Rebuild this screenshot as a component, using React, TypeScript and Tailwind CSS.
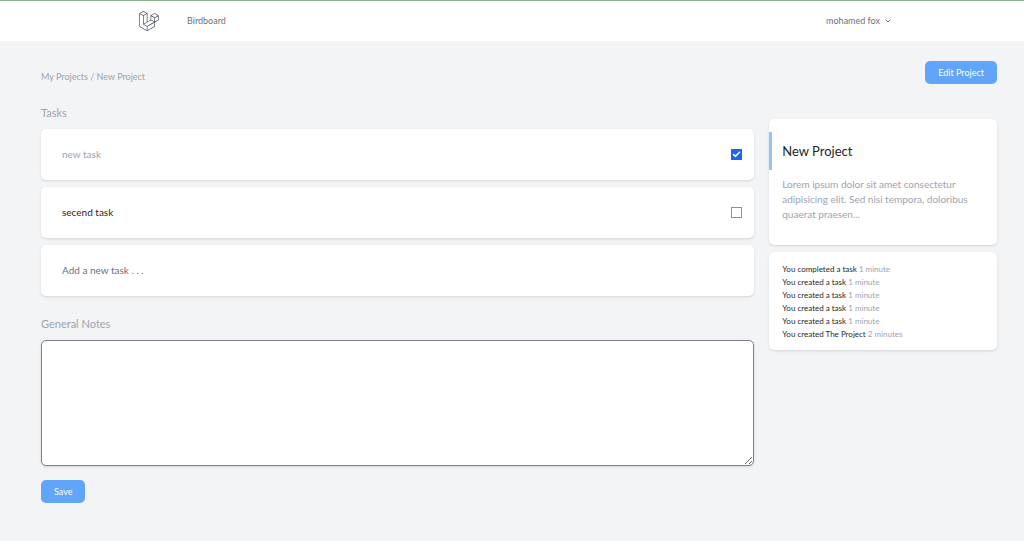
import { Check, ChevronDown } from "lucide-react";
import { SiLaravel } from "react-icons/si";

interface Task {
  id: number;
  body: string;
  completed: boolean;
}

interface Activity {
  id: number;
  text: string;
  time: string;
}

const tasks: Task[] = [
  { id: 1, body: "new task", completed: true },
  { id: 2, body: "secend task", completed: false },
];

const activities: Activity[] = [
  { id: 1, text: "You completed a task", time: "1 minute" },
  { id: 2, text: "You created a task", time: "1 minute" },
  { id: 3, text: "You created a task", time: "1 minute" },
  { id: 4, text: "You created a task", time: "1 minute" },
  { id: 5, text: "You created a task", time: "1 minute" },
  { id: 6, text: "You created The Project", time: "2 minutes" },
];

function Navigation() {
  return (
    <nav className="border-t border-t-[#8fb093] bg-white">
      <div className="mx-auto flex h-10 w-full max-w-[770px] items-center pl-3 pr-[5px]">
        <a href="#" aria-label="Home" className="text-[#374151]">
          <SiLaravel className="h-5 w-5" />
        </a>
        <a href="#" className="ml-7 text-[9px] text-[#6b7280]">
          Birdboard
        </a>
        <button type="button" className="ml-auto flex items-center gap-1 text-[9px] text-[#6b7280]">
          mohamed fox
          <ChevronDown className="h-2 w-2" strokeWidth={3} />
        </button>
      </div>
    </nav>
  );
}

function TaskRow({ task }: { task: Task }) {
  return (
    <form className="flex items-center rounded-[5px] bg-white py-[18px] pl-[21px] pr-3 shadow-sm">
      <input
        type="text"
        aria-label="Task"
        defaultValue={task.body}
        className={
          task.completed
            ? "min-w-0 flex-1 text-[10px] leading-[15px] text-[#9ca3af] outline-none"
            : "min-w-0 flex-1 text-[10px] leading-[15px] text-[#1f1f1f] outline-none"
        }
      />
      <span className="relative flex">
        <input
          type="checkbox"
          aria-label={`Complete ${task.body}`}
          defaultChecked={task.completed}
          className="peer h-[11px] w-[11px] appearance-none border border-[#8b909b] bg-white checked:border-[#1c64f2] checked:bg-[#1c64f2]"
        />
        <Check
          className="pointer-events-none absolute inset-0 m-auto hidden h-[9px] w-[9px] text-white peer-checked:block"
          strokeWidth={4}
        />
      </span>
    </form>
  );
}

export default function App() {
  return (
    <div className="min-h-screen bg-[#f3f4f6] font-['Lato','Liberation_Sans',sans-serif]">
      <Navigation />
      <main className="pb-9 pl-[41px] pr-3 pt-5">
        <header className="flex items-start justify-between pr-[15px]">
          <p className="pt-[9px] text-[9px] leading-[14px] text-[#9ca3af]">
            <a href="#">My Projects</a> / New Project
          </p>
          <a
            href="#"
            className="rounded-[5px] bg-[#60a5fa] px-[13px] py-1 text-[9px] leading-[15px] text-white"
          >
            Edit Project
          </a>
        </header>

        <div className="flex pt-[21px]">
          <div className="w-3/4 pr-[15px]">
            <h2 className="text-[11px] leading-4 text-[#9ca3af]">Tasks</h2>
            <div className="mt-2 flex flex-col gap-[7px]">
              {tasks.map((task) => (
                <TaskRow key={task.id} task={task} />
              ))}
              <form className="flex rounded-[5px] bg-white px-[21px] py-[18px] shadow-sm">
                <input
                  type="text"
                  aria-label="New task"
                  placeholder="Add a new task . . ."
                  className="w-full text-[10px] leading-[15px] outline-none placeholder:text-[#6b7280]"
                />
              </form>
            </div>

            <form className="pt-5">
              <label htmlFor="notes" className="block text-[11px] leading-4 text-[#9ca3af]">
                General Notes
              </label>
              <textarea
                id="notes"
                className="mt-2 block h-[126px] w-full rounded-[5px] border border-[#7d828d] bg-white p-3 text-[10px] shadow-sm"
              />
              <button
                type="submit"
                className="mt-[14px] rounded-[5px] bg-[#60a5fa] px-[13px] py-1 text-[9px] leading-[15px] text-white"
              >
                Save
              </button>
            </form>
          </div>

          <aside className="w-1/4 pr-[15px] pt-[14px]">
            <section className="rounded-[5px] bg-white pb-[23px] pt-[13px] shadow-sm">
              <h3 className="border-l-[3px] border-[#93c5fd] py-[10px] pl-[10px] text-[13px] leading-[18px] text-[#1f1f1f]">
                New Project
              </h3>
              <p className="px-[13px] pt-[7px] text-[10px] leading-[15px] text-[#9ca3af]">
                Lorem ipsum dolor sit amet consectetur adipisicing elit. Sed nisi tempora, doloribus
                quaerat praesen...
              </p>
            </section>

            <section className="mt-[7px] rounded-[5px] bg-white px-[13px] pb-[9px] pt-[11px] shadow-sm">
              <ul className="text-[8px] leading-[13px] text-[#1f1f1f]">
                {activities.map((activity) => (
                  <li key={activity.id}>
                    {activity.text} <span className="text-[#9ca3af]">{activity.time}</span>
                  </li>
                ))}
              </ul>
            </section>
          </aside>
        </div>
      </main>
    </div>
  );
}
